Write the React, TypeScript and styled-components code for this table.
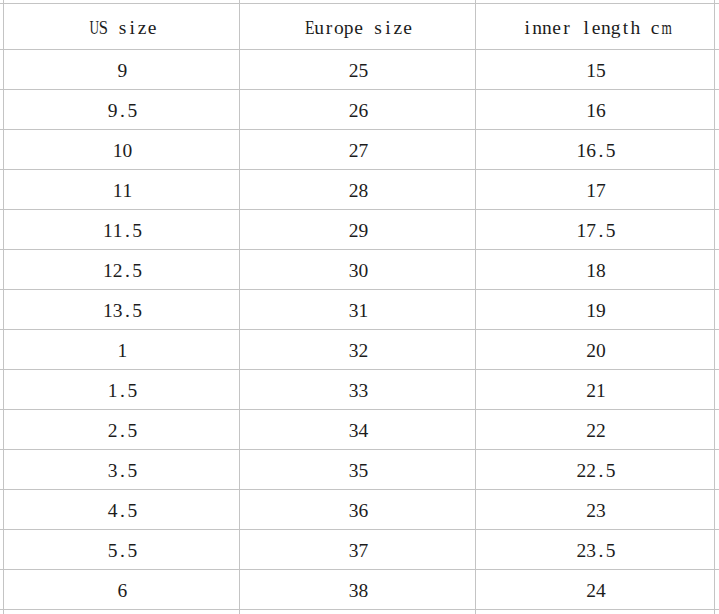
import React from "react";
import styled, { createGlobalStyle } from "styled-components";

const Global = createGlobalStyle`
  html, body { margin: 0; padding: 0; background: #ffffff; }
  #root { width: 719px; height: 614px; overflow: hidden; }
`;

const Sheet = styled.div`
  display: grid;
  width: 719px;
  height: 614px;
  grid-template-columns: 3px 235px 235px 238px 1fr;
  grid-template-rows: 3px 45px repeat(14, 39px) 1fr;
  gap: 1px;
  background: #c4c4c4;
  overflow: hidden;
`;

const Cell = styled.div<{ $head?: boolean }>`
  background: #ffffff;
  display: flex;
  align-items: center;
  justify-content: center;
  padding-top: ${(p) => (p.$head ? "3px" : "2px")};
  padding-left: 2px;
  box-sizing: border-box;
  font-family: "Liberation Serif", "Noto Sans CJK SC", serif;
  font-size: 19.5px;
  color: #1c1c1c;
  white-space: pre;
  overflow: hidden;
`;

const Ch = styled.span<{ $scale: number }>`
  display: inline-block;
  width: 9.84px;
  text-align: center;
  transform: scaleX(${(p) => p.$scale});
`;

const scaleFor = (c: string) => {
  if (c === "m" || c === "w") return 0.68;
  if (c === "U") return 0.68;
  if (c === "E") return 0.8;
  if (c === "S") return 0.85;
  return 1;
};

function Mono({ text }: { text: string }) {
  return (
    <>
      {Array.from(text).map((c, i) => (
        <Ch key={i} $scale={scaleFor(c)}>
          {c}
        </Ch>
      ))}
    </>
  );
}

const headers = ["US size", "Europe size", "inner length cm"];
const rows: [string, string, string][] = [
  ["9", "25", "15"],
  ["9.5", "26", "16"],
  ["10", "27", "16.5"],
  ["11", "28", "17"],
  ["11.5", "29", "17.5"],
  ["12.5", "30", "18"],
  ["13.5", "31", "19"],
  ["1", "32", "20"],
  ["1.5", "33", "21"],
  ["2.5", "34", "22"],
  ["3.5", "35", "22.5"],
  ["4.5", "36", "23"],
  ["5.5", "37", "23.5"],
  ["6", "38", "24"],
];

export default function App() {
  const blankRow = (key: string) =>
    Array.from({ length: 5 }, (_, i) => <Cell key={`${key}-${i}`} />);
  return (
    <>
      <Global />
      <Sheet>
        {blankRow("top")}
        <Cell />
        {headers.map((h) => (
          <Cell key={h} $head>
            <Mono text={h} />
          </Cell>
        ))}
        <Cell />
        {rows.map((r, ri) => (
          <React.Fragment key={ri}>
            <Cell />
            {r.map((v, ci) => (
              <Cell key={ci}>
                <Mono text={v} />
              </Cell>
            ))}
            <Cell />
          </React.Fragment>
        ))}
        {blankRow("bottom")}
      </Sheet>
    </>
  );
}
